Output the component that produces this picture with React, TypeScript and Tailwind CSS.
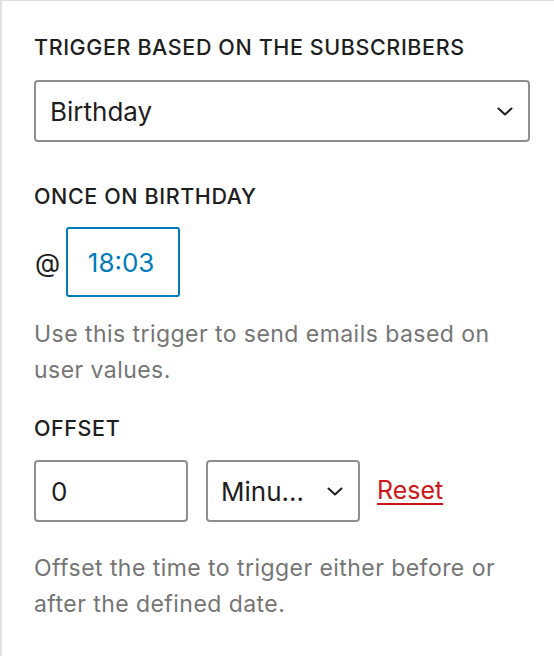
import React from "react";

const Chevron = () => (
    <svg width="16" height="9" viewBox="0 0 16 9" fill="none" className="shrink-0">
        <path d="M1.5 1.5 L8 7.5 L14.5 1.5" stroke="#1e1e1e" strokeWidth="2" strokeLinecap="round" strokeLinejoin="round" />
    </svg>
);

const Label = ({ children }: { children: React.ReactNode }) => (
    <div className="text-[21.5px] leading-[24px] font-medium uppercase text-[#1e1e1e] tracking-[0.6px]">{children}</div>
);

const Help = ({ children }: { children: React.ReactNode }) => (
    <p className="text-[23px] leading-[36px] text-[#757575] tracking-[0.45px] pr-[20px]">{children}</p>
);

export default function App() {
    return (
        <div
            className="w-[554px] h-[656px] bg-white border-l-2 border-t border-[#e0e0e0] pl-[32px] pr-[24px] pt-[34px]"
            style={{ fontFamily: "Inter, 'Noto Sans', sans-serif" }}
        >
            {/* Trigger select */}
            <Label>Trigger based on the subscribers</Label>
            <div className="mt-[21px] h-[62px] border-2 border-[#8f8f8f] rounded-[4px] flex items-center justify-between pl-[14px] pr-[15px]">
                <span className="text-[26px] text-[#1e1e1e]">Birthday</span>
                <Chevron />
            </div>

            {/* Once on birthday */}
            <div className="mt-[42px]">
                <Label>Once on birthday</Label>
            </div>
            <div className="mt-[19px] flex items-center gap-[6px]">
                <span className="text-[26px] text-[#1e1e1e] ml-[1px]">@</span>
                <div className="w-[114px] h-[70px] border-2 border-[#007cba] rounded-[3px] flex items-center justify-center pr-[4px] text-[26px] text-[#007cba]">
                    18:03
                </div>
            </div>
            <div className="mt-[19px]">
                <Help>Use this trigger to send emails based on user values.</Help>
            </div>

            {/* Offset */}
            <div className="mt-[28px]">
                <Label>Offset</Label>
            </div>
            <div className="mt-[20px] flex items-center">
                <div className="w-[154px] h-[62px] border-2 border-[#8f8f8f] rounded-[4px] flex items-center pl-[15px] text-[26px] text-[#1e1e1e]">
                    0
                </div>
                <div className="ml-[18px] w-[154px] h-[62px] border-2 border-[#8f8f8f] rounded-[4px] flex items-center justify-between pl-[13px] pr-[15px]">
                    <span className="text-[26px] text-[#1e1e1e]">Minu…</span>
                    <Chevron />
                </div>
                <a className="ml-[17px] text-[25px] text-[#cc1818] underline underline-offset-[4px] decoration-2">Reset</a>
            </div>
            <div className="mt-[28px]">
                <Help>Offset the time to trigger either before or after the defined date.</Help>
            </div>
        </div>
    );
}
